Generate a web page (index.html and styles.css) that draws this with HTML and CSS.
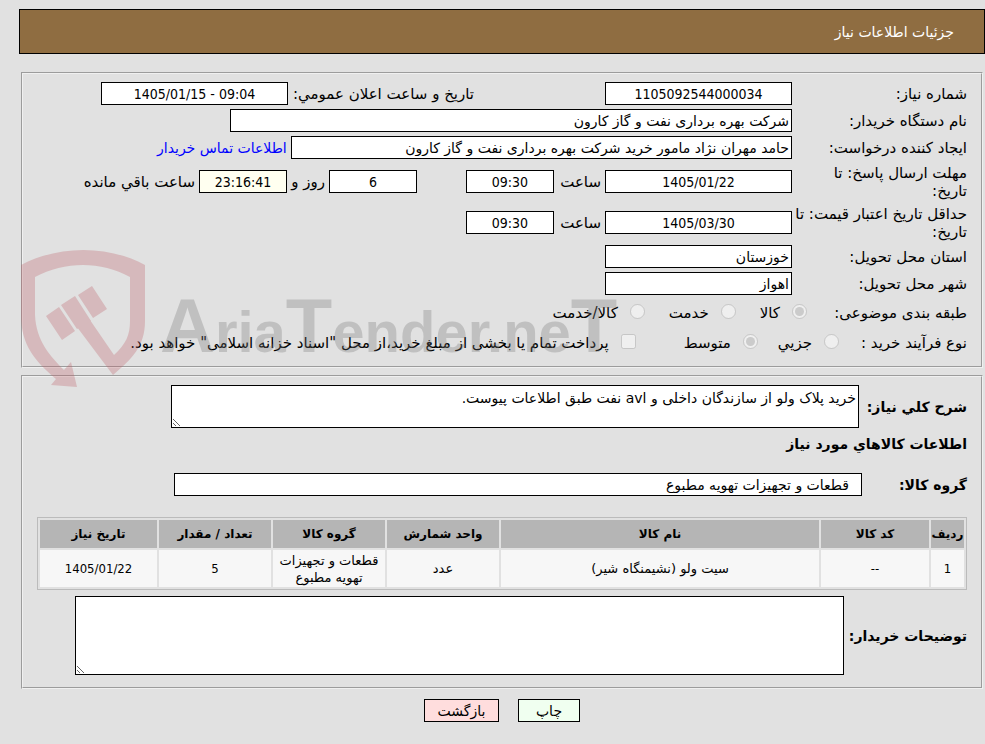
FILE: index.html
```html
<!DOCTYPE html>
<html lang="fa" dir="rtl">
<head>
    <meta charset="UTF-8">
    <meta name="viewport" content="width=device-width, initial-scale=1.0">
    <title>جزئیات اطلاعات نیاز</title>
    <link rel="stylesheet" href="styles.css">
</head>
<body>
    <h1 class="page-title">جزئیات اطلاعات نیاز</h1>

    <form class="need-form">
        <fieldset class="box">
            <div class="row">
                <label class="caption" for="needNo">شماره نیاز:</label>
                <input class="field medium center" type="text" id="needNo" value="1105092544000034" readonly>
                <label class="announce" for="announceDate">تاریخ و ساعت اعلان عمومي:</label>
                <input class="field medium center" type="text" id="announceDate" value="1405/01/15 - 09:04" dir="ltr" readonly>
            </div>
            <div class="row">
                <label class="caption" for="buyerOrg">نام دستگاه خریدار:</label>
                <input class="field org" type="text" id="buyerOrg" value="شرکت بهره برداری نفت و گاز کارون" readonly>
            </div>
            <div class="row">
                <label class="caption" for="creator">ایجاد کننده درخواست:</label>
                <input class="field creator" type="text" id="creator" value="حامد مهران نژاد مامور خرید شرکت بهره برداری نفت و گاز کارون" readonly>
                <a class="contact" href="#">اطلاعات تماس خریدار</a>
            </div>
            <div class="row tall">
                <label class="caption" for="replyDate">مهلت ارسال پاسخ: تا تاریخ:</label>
                <input class="field medium center" type="text" id="replyDate" value="1405/01/22" readonly>
                <label class="unit" for="replyTime">ساعت</label>
                <input class="field small center" type="text" id="replyTime" value="09:30" readonly>
                <input class="field small center days" type="text" id="daysLeft" value="6" readonly>
                <label class="unit" for="daysLeft">روز و</label>
                <input class="field small center timer" type="text" id="timeLeft" value="23:16:41" readonly>
                <label for="timeLeft">ساعت باقي مانده</label>
            </div>
            <div class="row tall">
                <label class="caption" for="priceDate">حداقل تاریخ اعتبار قیمت: تا تاریخ:</label>
                <input class="field medium center" type="text" id="priceDate" value="1405/03/30" readonly>
                <label class="unit" for="priceTime">ساعت</label>
                <input class="field small center" type="text" id="priceTime" value="09:30" readonly>
            </div>
            <div class="row">
                <label class="caption" for="province">استان محل تحویل:</label>
                <input class="field medium" type="text" id="province" value="خوزستان" readonly>
            </div>
            <div class="row">
                <label class="caption" for="city">شهر محل تحویل:</label>
                <input class="field medium" type="text" id="city" value="اهواز" readonly>
            </div>
            <div class="row options">
                <span class="caption subject">طبقه بندی موضوعی:</span>
                <label class="option"><input type="radio" name="subject" checked disabled><span>کالا</span></label>
                <label class="option"><input type="radio" name="subject" disabled><span>خدمت</span></label>
                <label class="option"><input type="radio" name="subject" disabled><span>کالا/خدمت</span></label>
            </div>
            <div class="row options last">
                <span class="caption process">نوع فرآیند خرید :</span>
                <label class="option"><input type="radio" name="process" disabled><span>جزيي</span></label>
                <label class="option average"><input type="radio" name="process" checked disabled><span>متوسط</span></label>
                <label class="option"><input type="checkbox" disabled><span>پرداخت تمام یا بخشی از مبلغ خرید،از محل "اسناد خزانه اسلامی" خواهد بود.</span></label>
            </div>
        </fieldset>

        <fieldset class="box goods">
            <div class="row">
                <label class="title" for="summary">شرح کلي نیاز:</label>
                <textarea class="field summary" id="summary" readonly>خرید پلاک ولو از سازندگان داخلی و avl نفت طبق اطلاعات پیوست.</textarea>
            </div>
            <h2 class="title heading">اطلاعات کالاهاي مورد نیاز</h2>
            <div class="row">
                <label class="title group" for="goodsGroup">گروه کالا:</label>
                <input class="field goods-group" type="text" id="goodsGroup" value="قطعات و تجهیزات تهویه مطبوع" readonly>
            </div>
            <table class="items">
                <colgroup>
                    <col class="col-row"><col class="col-code"><col><col class="col-info"><col class="col-info"><col class="col-info"><col class="col-date">
                </colgroup>
                <tr>
                    <th>ردیف</th>
                    <th>کد کالا</th>
                    <th>نام کالا</th>
                    <th>واحد شمارش</th>
                    <th>گروه کالا</th>
                    <th>تعداد / مقدار</th>
                    <th>تاریخ نیاز</th>
                </tr>
                <tr>
                    <td class="num">1</td>
                    <td class="num">--</td>
                    <td>سیت ولو (نشیمنگاه شیر)</td>
                    <td>عدد</td>
                    <td>قطعات و تجهیزات تهویه مطبوع</td>
                    <td class="num">5</td>
                    <td class="num">1405/01/22</td>
                </tr>
            </table>
            <div class="row">
                <label class="title notes-title" for="notes">توضیحات خریدار:</label>
                <textarea class="field notes" id="notes" readonly></textarea>
            </div>
        </fieldset>

        <div class="buttons">
            <button class="btn print" type="button">چاپ</button>
            <button class="btn back" type="button">بازگشت</button>
        </div>

        <svg class="watermark" width="610" height="140" viewBox="0 0 610 140" direction="ltr" aria-hidden="true">
            <path fill="#bd6068" d="M0 16C38-4 87-4 124 16V72C124 97 111 110 92 126L56 78 69 71 93 106C105 95 109 86 109 72V28C80 12 44 12 14 28V66C15 92 30 108 43 121L50 113 56 138 30 136 35 130C14 112 0 96 0 66Z"/>
            <path fill="#bd6068" d="M25 67 38 58 54 82 41 91ZM40 56 54 47 70 72 56 80ZM57 46 71 37 86 60 72 69Z"/>
            <text class="brand" x="139" y="103"><tspan class="big">A</tspan>ria<tspan class="big">T</tspan>ender.ne<tspan class="big">T</tspan></text>
        </svg>
    </form>
</body>
</html>
```
FILE: styles.css
```css
* {
    box-sizing: border-box;
}
body {
    margin: 9px 0 0 19px;
    background: #e1e1e1;
    color: #000;
    font-family: "DejaVu Sans", sans-serif;
    font-size: 14px;
    line-height: 18px;
}
.page-title {
    margin: 0 0 18px;
    padding: 13px 30px 12px;
    border: 1px solid #000;
    background: #8f6d41;
    color: #fff;
    font-size: 14px;
    font-weight: normal;
}
.need-form {
    position: relative;
    margin: 0 2px;
}
.box {
    margin: 0 0 7px;
    padding: 6px 14px 9px;
    border: 2px groove #f0f0f0;
}
.row {
    display: flex;
    align-items: center;
    min-height: 27px;
    white-space: nowrap;
}
.row label,
.caption {
    font-size: 15px;
}
.row.tall {
    min-height: 41px;
}
.row.options {
    min-height: 32px;
}
.row.options.last {
    min-height: 28px;
}
.caption {
    flex: none;
    width: 175px;
    padding-left: 3px;
    white-space: normal;
}
.caption.subject {
    width: 160px;
}
.caption.process {
    width: 128px;
}
.field {
    height: 23px;
    margin: 0;
    padding: 1px 2px;
    border: 1px solid #000;
    border-radius: 0;
    background: #fff;
    color: #000;
    font: inherit;
}
.field.center {
    font-family: "DejaVu Sans Condensed", "DejaVu Sans", sans-serif;
    text-align: center;
}
.medium {
    width: 187px;
}
.small {
    width: 88px;
}
.org {
    flex: 1;
    margin-left: 193px;
}
.creator {
    flex: 1;
}
.contact {
    margin: 0 4px 0 120px;
    color: #00f;
    text-decoration: none;
}
.announce {
    width: 317px;
    padding-right: 131px;
}
.unit {
    width: 51px;
    padding-right: 4px;
}
.days {
    margin-right: 49px;
}
.days + .unit {
    width: 42px;
}
.timer {
    margin-left: 4px;
    background: #fffff0;
}
.option {
    display: flex;
    align-items: center;
    margin-left: 24px;
}
.option input {
    width: 15px;
    height: 15px;
    margin: 0 0 3px 12px;
}
.last .option {
    margin-left: 20px;
}
.last .average {
    margin-left: 48px;
}
.goods {
    padding: 8px 14px 12px;
}
.title,
.row .title {
    flex: none;
    width: 108px;
    font-size: 14px;
    font-weight: bold;
}
.summary {
    flex: 1;
    height: 43px;
    margin-left: 134px;
    padding: 3px 2px;
}
.title.heading {
    width: auto;
    margin: 7px 0 18px;
}
.row .group {
    width: 105px;
}
.goods-group {
    flex: 1;
    margin-left: 137px;
    padding: 1px 12px;
}
.items {
    width: 100%;
    margin: 19px 0 6px;
    border: 1px solid #bbb;
    border-spacing: 2px;
    table-layout: fixed;
    font-size: 13px;
    line-height: 17px;
    text-align: center;
}
.items th {
    height: 28px;
    padding: 0;
    background: #b5b5b5;
    font-size: 12px;
}
.items td {
    height: 37px;
    padding: 1px;
    background: #f7f7f7;
}
.items .num {
    font-family: "DejaVu Sans Condensed", "DejaVu Sans", sans-serif;
}
.col-row {
    width: 33px;
}
.col-code {
    width: 108px;
}
.col-info {
    width: 112px;
}
.col-date {
    width: 117px;
}
.row .notes-title {
    width: 123px;
}
.notes {
    flex: 1;
    height: 79px;
    margin-left: 38px;
}
.buttons {
    display: flex;
    justify-content: center;
    gap: 19px;
    margin-top: 10px;
}
.btn {
    height: 23px;
    padding: 0;
    border: 1px solid #000;
    color: #000;
    font: inherit;
}
.print {
    width: 62px;
    background: #f0fff0;
}
.back {
    width: 75px;
    background: #fdd;
}
/* brand mark lies over the form */
.watermark {
    position: absolute;
    top: 177px;
    left: 0;
    opacity: 0.3;
    pointer-events: none;
}
.brand {
    fill: #777;
    font-family: "Liberation Sans Narrow", "Liberation Sans", sans-serif;
    font-size: 58px;
    font-weight: bold;
}
.big {
    font-size: 76px;
}
```
